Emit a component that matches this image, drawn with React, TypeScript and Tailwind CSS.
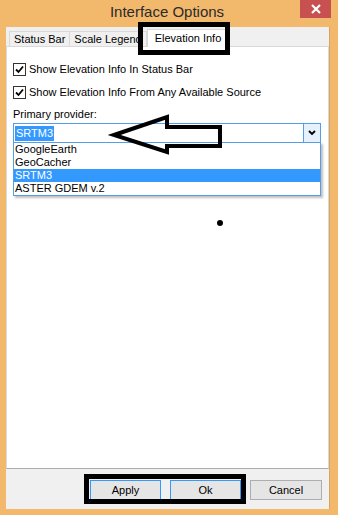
import { useState } from "react";

const providers = ["GoogleEarth", "GeoCacher", "SRTM3", "ASTER GDEM v.2"];

function CheckBox({ label }: { label: string }) {
	return (
		<div className="flex items-center gap-[3px] h-[13px]">
			<div className="w-[13px] h-[13px] border border-[#333] bg-white flex items-center justify-center">
				<svg width="9" height="9" viewBox="0 0 9 9">
					<path d="M1 4.5 L3.5 7 L8 1.5" fill="none" stroke="#000" strokeWidth="1.8" />
				</svg>
			</div>
			<span className="text-[11px] leading-[13px] text-black">{label}</span>
		</div>
	);
}

export default function App() {
	const [selected] = useState("SRTM3");

	return (
		<div className="relative w-[338px] h-[515px] bg-[#f2b86c] flex flex-col font-['Liberation_Sans',Arial,sans-serif] overflow-hidden">
			{/* title bar */}
			<div className="h-[27px] flex items-start shrink-0">
				<div className="flex-1 pl-[34px] pt-[1px] text-center text-[15px] text-[#2b2b2b]">Interface Options</div>
				<button className="w-[31px] h-[18px] bg-[#c75050] mr-[7px] flex items-center justify-center">
					<svg width="10" height="10" viewBox="0 0 10 10">
						<path d="M1 1 L9 9 M9 1 L1 9" stroke="#fff" strokeWidth="2.2" />
					</svg>
				</button>
			</div>

			{/* client area */}
			<div className="flex-1 ml-[6px] mr-[8px] mb-[6px] bg-[#f0f0f0] border-r border-[#d9a45c] flex flex-col">
				{/* tabs */}
				<div className="flex items-end h-[19px] pl-[3px] text-[11px] text-black">
					<div className="h-[15px] px-[4px] border border-b-0 border-[#d9d9d9] bg-[#f0f0f0] flex items-center">Status Bar</div>
					<div className="h-[15px] px-[4px] border border-b-0 border-l-0 border-[#d9d9d9] bg-[#f0f0f0] flex items-center">Scale Legend</div>
					<div className="h-[18px] px-[7px] -mb-px border border-b-0 border-[#d9d9d9] bg-white flex items-center relative z-10">
						Elevation Info
					</div>
				</div>

				{/* panel */}
				<div className="h-[423px] bg-white border border-[#d9d9d9] border-b-[#acacac] flex flex-col pt-[16px] pl-[6px] pr-[7px]">
					<div className="flex flex-col gap-[10px]">
						<CheckBox label="Show Elevation Info In Status Bar" />
						<CheckBox label="Show Elevation Info From Any Available Source" />
					</div>
					<div className="mt-[9px] text-[11px] leading-[13px] text-black">Primary provider:</div>
					<div className="relative mt-[2px]">
						<div className="h-[20px] border border-[#569de5] bg-white flex items-stretch">
							<div className="flex-1 flex items-center pl-[1px]">
								<span className="bg-[#3399ff] text-white text-[11px] leading-[15px] px-[1px]">{selected}</span>
							</div>
							<div className="w-[17px] border-l border-[#569de5] bg-[#e5f1fb] flex items-center justify-center">
								<svg width="8" height="6" viewBox="0 0 8 6">
									<path d="M1 1 L4 4 L7 1" fill="none" stroke="#000" strokeWidth="1.8" />
								</svg>
							</div>
						</div>
						<div className="absolute left-0 right-0 top-[19px] bg-white border border-[#569de5] shadow-[2px_2px_2px_rgba(0,0,0,0.25)] z-10 flex flex-col">
							{providers.map((p) => (
								<div
									key={p}
									className={
										p === selected
											? "h-[13px] leading-[13px] pl-[1px] text-[11px] bg-[#3399ff] text-white"
											: "h-[13px] leading-[13px] pl-[1px] text-[11px] text-black"
									}
								>
									{p}
								</div>
							))}
						</div>
					</div>
				</div>

				{/* bottom buttons */}
				<div className="flex-1 flex items-start justify-end gap-[9px] pt-[11px] pr-[7px]">
					<button className="w-[71px] h-[20px] border border-[#3399ff] bg-[#e5e5e5] text-[11px] text-black">Apply</button>
					<button className="w-[71px] h-[20px] border border-[#3399ff] bg-[#e5e5e5] text-[11px] text-black">Ok</button>
					<button className="w-[72px] h-[20px] border border-[#adadad] bg-[#e5e5e5] text-[11px] text-black">Cancel</button>
				</div>
			</div>

			{/* annotations */}
			<div className="absolute left-[138px] top-[22px] w-[92px] h-[33px] border-[5px] border-black z-20" />
			<div className="absolute left-[84px] top-[474px] w-[162px] h-[30px] border-[5px] border-black z-20" />
			<svg className="absolute left-0 top-0 z-20 pointer-events-none" width="338" height="515">
				<path
					d="M114 135 L167 117 L167 127 L220 127 L220 146 L167 146 L167 152 Z"
					fill="none"
					stroke="#000"
					strokeWidth="4"
					strokeLinejoin="miter"
				/>
				<circle cx="220" cy="223" r="3" fill="#000" />
			</svg>
		</div>
	);
}
